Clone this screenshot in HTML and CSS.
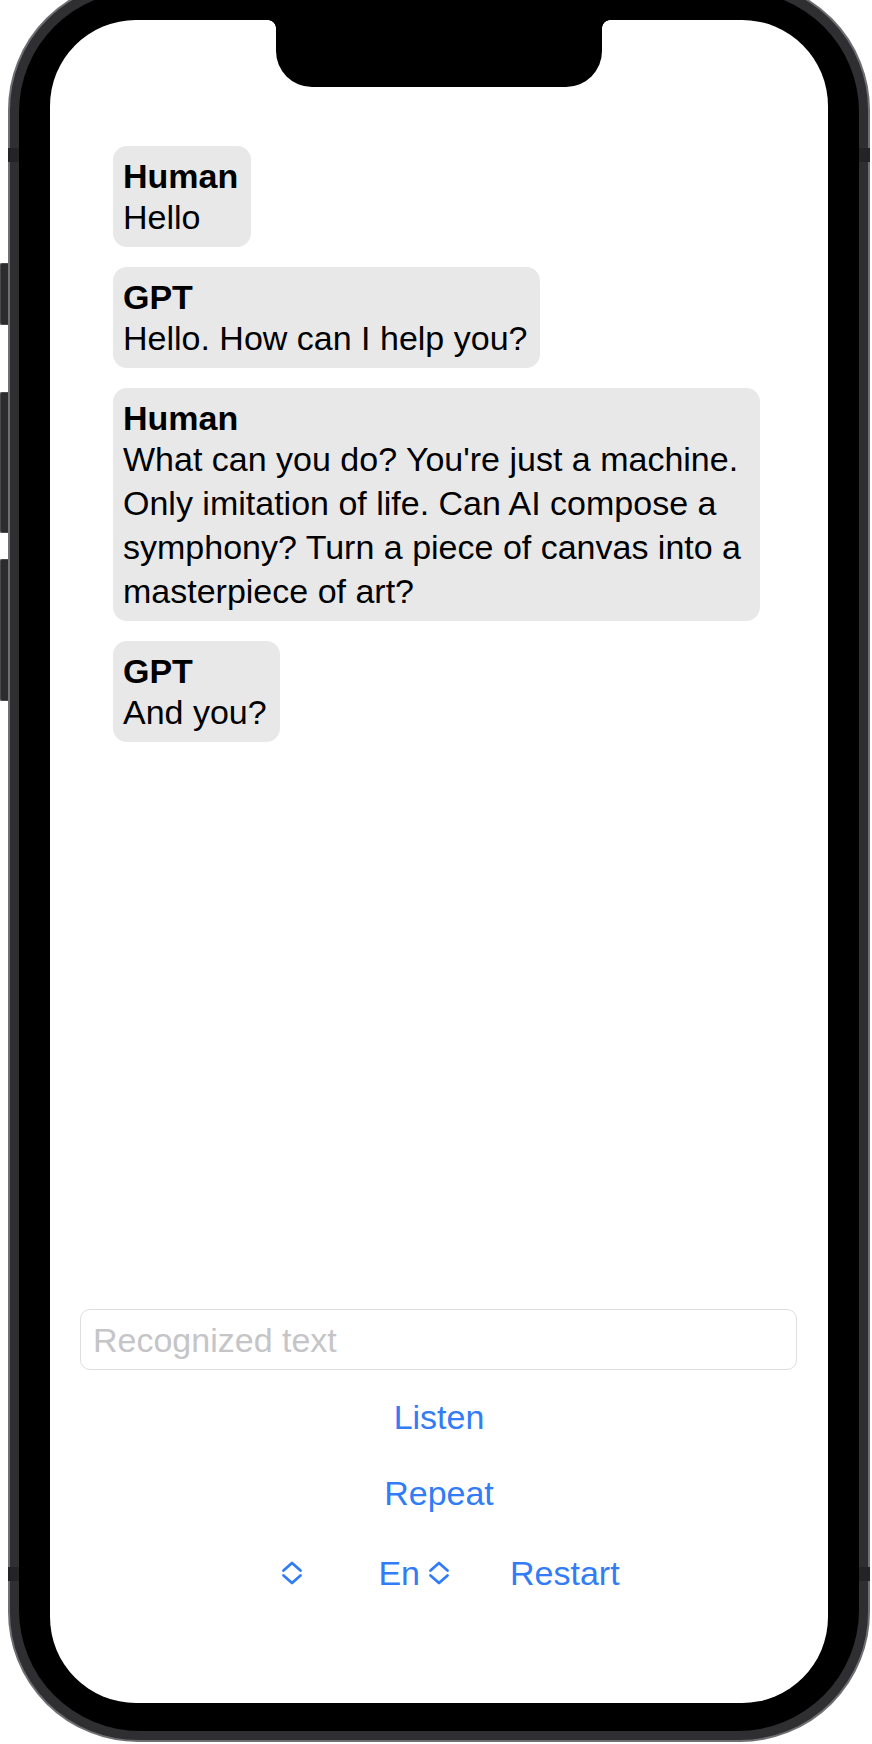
FILE: index.html
```html
<!DOCTYPE html>
<html lang="en">
<head>
<meta charset="utf-8">
<title>Chat</title>
<link rel="stylesheet" href="styles.css">
</head>
<body>
<div class="phone">
  <span class="side-btn btn-action"></span>
  <span class="side-btn btn-vol-up"></span>
  <span class="side-btn btn-vol-down"></span>
  <span class="band band-left band-top"></span>
  <span class="band band-right band-top"></span>
  <span class="band band-left band-bottom"></span>
  <span class="band band-right band-bottom"></span>
  <div class="bezel">
    <div class="screen">
      <div class="notch"></div>
      <main class="chat">
        <div class="bubble">
          <div class="name">Human</div>
          <div class="msg">Hello</div>
        </div>
        <div class="bubble">
          <div class="name">GPT</div>
          <div class="msg">Hello. How can I help you?</div>
        </div>
        <div class="bubble">
          <div class="name">Human</div>
          <div class="msg">What can you do? You're just a machine. Only imitation of life. Can AI compose a symphony? Turn a piece of canvas into a masterpiece of art?</div>
        </div>
        <div class="bubble">
          <div class="name">GPT</div>
          <div class="msg">And you?</div>
        </div>
      </main>
      <section class="controls">
        <div class="field"><span class="placeholder">Recognized text</span></div>
        <button class="link listen">Listen</button>
        <button class="link repeat">Repeat</button>
        <div class="row">
          <button class="link picker picker-empty">
            <svg class="chev" viewBox="0 0 22 24" width="22" height="24"><path d="M2.5 9.5 L11 2 L19.5 9.5 M2.5 14.5 L11 22 L19.5 14.5"/></svg>
          </button>
          <button class="link picker picker-lang">En
            <svg class="chev" viewBox="0 0 22 24" width="22" height="24"><path d="M2.5 9.5 L11 2 L19.5 9.5 M2.5 14.5 L11 22 L19.5 14.5"/></svg>
          </button>
          <button class="link restart">Restart</button>
        </div>
      </section>
    </div>
  </div>
</div>
</body>
</html>
```
FILE: styles.css
```css
html, body {
  margin: 0;
  padding: 0;
  background: #ffffff;
}
body {
  overflow: hidden;
  height: 1744px;
  font-family: "Liberation Sans", Arial, sans-serif;
  font-size: 34px;
  color: #000;
}

.phone {
  position: relative;
  box-sizing: border-box;
  width: 862px;
  height: 1762px;
  margin: -20px 0 0 8px;
  padding: 9px;
  border: 2px solid #6f6f73;
  border-radius: 130px;
  background: #2f2f31;
}

.side-btn {
  position: absolute;
  left: -10px;
  width: 8px;
  box-sizing: border-box;
  background: #2c2c2e;
  border: 1px solid #4a4a4d;
  border-right: 0;
  border-radius: 2px 0 0 2px;
}
.btn-action { top: 281px; height: 62px; }
.btn-vol-up { top: 410px; height: 141px; }
.btn-vol-down { top: 577px; height: 142px; }

.band {
  position: absolute;
  width: 11px;
  height: 14px;
  background: #242426;
}
.band-left { left: -2px; }
.band-right { right: -2px; }
.band-top { top: 166px; }
.band-bottom { top: 1585px; }

.bezel {
  box-sizing: border-box;
  height: 100%;
  padding: 29px 31px 28px 31px;
  background: #000;
  border-radius: 121px;
}

.screen {
  position: relative;
  height: 100%;
  background: #fff;
  border-radius: 86px;
  overflow: hidden;
  display: flex;
  flex-direction: column;
}

.notch {
  position: absolute;
  top: 0;
  left: 226px;
  width: 326px;
  height: 67px;
  background: #000;
  border-radius: 0 0 36px 36px;
}
.notch::before,
.notch::after {
  content: "";
  position: absolute;
  top: 0;
  width: 8px;
  height: 8px;
}
.notch::before {
  left: -8px;
  background: radial-gradient(circle at 0 100%, transparent 7.5px, #000 8px);
}
.notch::after {
  right: -8px;
  background: radial-gradient(circle at 100% 100%, transparent 7.5px, #000 8px);
}

.chat {
  display: flex;
  flex-direction: column;
  align-items: flex-start;
  gap: 20px;
  padding: 126px 0 0 63px;
}

.bubble {
  box-sizing: border-box;
  max-width: 647px;
  padding: 11px 13px 8px 10px;
  background: #e8e8e8;
  border-radius: 14px;
}
.name {
  font-weight: bold;
  line-height: 38px;
}
.msg {
  line-height: 44px;
}

.controls {
  margin-top: auto;
  padding-bottom: 108px;
  display: flex;
  flex-direction: column;
  align-items: center;
}

.field {
  align-self: stretch;
  box-sizing: border-box;
  height: 61px;
  margin: 0 31px 0 30px;
  padding-left: 12px;
  border: 1px solid #dedede;
  border-radius: 10px;
  display: flex;
  align-items: center;
}
.placeholder {
  color: #c5c5c7;
  line-height: 40px;
}

.link {
  display: inline-flex;
  align-items: center;
  height: 44px;
  padding: 0;
  border: 0;
  background: none;
  font: inherit;
  color: #327cf5;
  line-height: 44px;
}
.listen { margin-top: 25px; }
.repeat { margin-top: 32px; }

.row {
  margin-top: 36px;
  align-self: stretch;
  display: flex;
  justify-content: center;
  align-items: center;
  padding-left: 23px;
  height: 44px;
}
.picker-empty { margin-right: 75px; }
.picker-lang { gap: 8px; margin-right: 60px; }

.chev {
  display: block;
  fill: none;
  stroke: #327cf5;
  stroke-width: 2.8;
  stroke-linecap: round;
  stroke-linejoin: round;
}
```
